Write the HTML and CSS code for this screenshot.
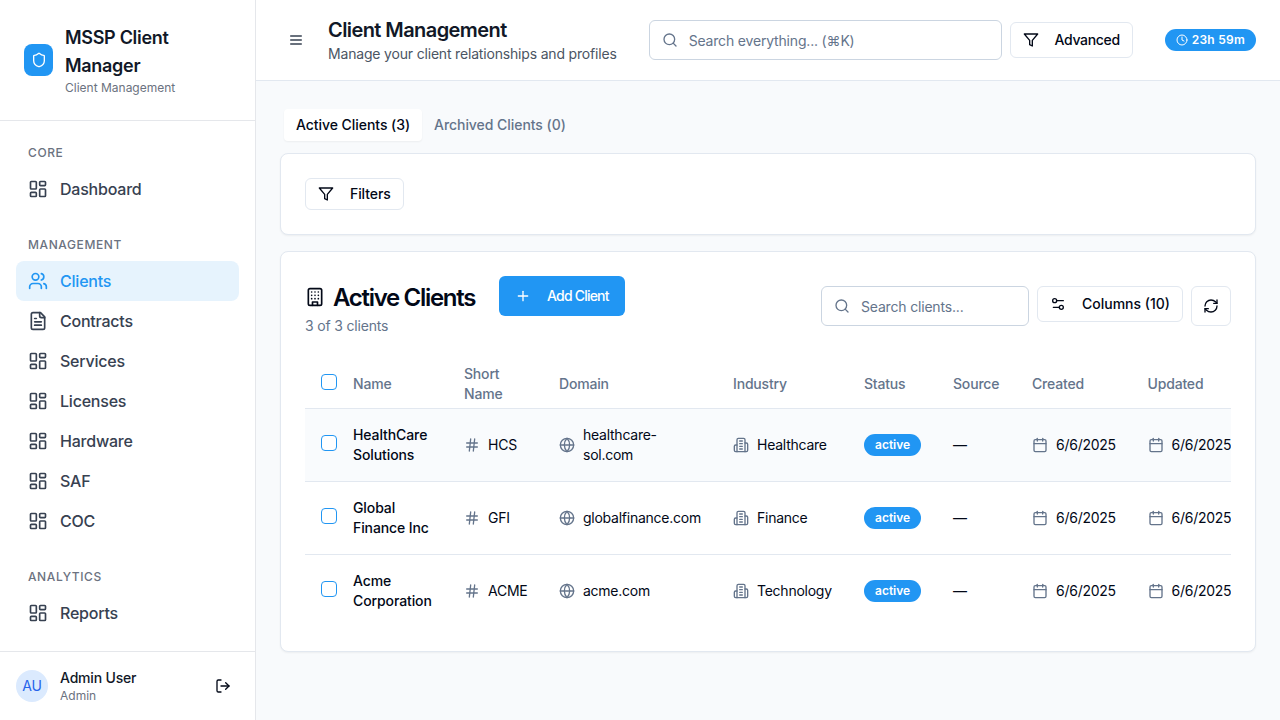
FILE: index.html
```html
<!DOCTYPE html>
<html lang="en">
<head>
    <meta charset="UTF-8">
    <meta name="viewport" content="width=device-width, initial-scale=1.0">
    <title>MSSP Client Manager</title>
    <link rel="stylesheet" href="styles.css">
</head>
<body>
    <!-- icon set -->
    <svg class="icon-defs" aria-hidden="true">
        <symbol id="i-dashboard" viewBox="0 0 24 24"><rect x="3" y="3" width="7" height="9" rx="1"/><rect x="14" y="3" width="7" height="5" rx="1"/><rect x="14" y="12" width="7" height="9" rx="1"/><rect x="3" y="16" width="7" height="5" rx="1"/></symbol>
        <symbol id="i-users" viewBox="0 0 24 24"><path d="M16 21v-2a4 4 0 0 0-4-4H6a4 4 0 0 0-4 4v2"/><circle cx="9" cy="7" r="4"/><path d="M22 21v-2a4 4 0 0 0-3-3.87"/><path d="M16 3.13a4 4 0 0 1 0 7.75"/></symbol>
        <symbol id="i-file" viewBox="0 0 24 24"><path d="M15 2H6a2 2 0 0 0-2 2v16a2 2 0 0 0 2 2h12a2 2 0 0 0 2-2V7Z"/><path d="M14 2v4a2 2 0 0 0 2 2h4"/><path d="M10 9H8"/><path d="M16 13H8"/><path d="M16 17H8"/></symbol>
        <symbol id="i-shield" viewBox="0 0 24 24"><path d="M20 13c0 5-3.5 7.5-7.66 8.95a1 1 0 0 1-.67-.01C7.5 20.5 4 18 4 13V6a1 1 0 0 1 1-1c2 0 4.5-1.2 6.24-2.72a1.17 1.17 0 0 1 1.52 0C14.51 3.81 17 5 19 5a1 1 0 0 1 1 1z"/></symbol>
        <symbol id="i-menu" viewBox="0 0 24 24"><path d="M4 6h16"/><path d="M4 12h16"/><path d="M4 18h16"/></symbol>
        <symbol id="i-search" viewBox="0 0 24 24"><circle cx="11" cy="11" r="8"/><path d="m21 21-4.3-4.3"/></symbol>
        <symbol id="i-filter" viewBox="0 0 24 24"><polygon points="22 3 2 3 10 12.46 10 19 14 21 14 12.46 22 3"/></symbol>
        <symbol id="i-clock" viewBox="0 0 24 24"><circle cx="12" cy="12" r="10"/><polyline points="12 6 12 12 16 14"/></symbol>
        <symbol id="i-plus" viewBox="0 0 24 24"><path d="M5 12h14"/><path d="M12 5v14"/></symbol>
        <symbol id="i-building" viewBox="0 0 24 24"><rect x="4" y="2" width="16" height="20" rx="2"/><path d="M9 22v-4h6v4"/><path d="M8 6h.01"/><path d="M16 6h.01"/><path d="M12 6h.01"/><path d="M12 10h.01"/><path d="M12 14h.01"/><path d="M16 10h.01"/><path d="M16 14h.01"/><path d="M8 10h.01"/><path d="M8 14h.01"/></symbol>
        <symbol id="i-building2" viewBox="0 0 24 24"><path d="M6 22V4a2 2 0 0 1 2-2h8a2 2 0 0 1 2 2v18Z"/><path d="M6 12H4a2 2 0 0 0-2 2v6a2 2 0 0 0 2 2h2"/><path d="M18 9h2a2 2 0 0 1 2 2v9a2 2 0 0 1-2 2h-2"/><path d="M10 6h4"/><path d="M10 10h4"/><path d="M10 14h4"/><path d="M10 18h4"/></symbol>
        <symbol id="i-hash" viewBox="0 0 24 24"><path d="M4 9h16"/><path d="M4 15h16"/><path d="M10 3 8 21"/><path d="M16 3l-2 18"/></symbol>
        <symbol id="i-globe" viewBox="0 0 24 24"><circle cx="12" cy="12" r="10"/><path d="M12 2a14.5 14.5 0 0 0 0 20 14.5 14.5 0 0 0 0-20"/><path d="M2 12h20"/></symbol>
        <symbol id="i-calendar" viewBox="0 0 24 24"><path d="M8 2v4"/><path d="M16 2v4"/><rect x="3" y="4" width="18" height="18" rx="2"/><path d="M3 10h18"/></symbol>
        <symbol id="i-sliders" viewBox="0 0 24 24"><path d="M20 7h-9"/><path d="M14 17H5"/><circle cx="17" cy="17" r="3"/><circle cx="7" cy="7" r="3"/></symbol>
        <symbol id="i-refresh" viewBox="0 0 24 24"><path d="M3 12a9 9 0 0 1 9-9 9.75 9.75 0 0 1 6.74 2.74L21 8"/><path d="M21 3v5h-5"/><path d="M21 12a9 9 0 0 1-9 9 9.75 9.75 0 0 1-6.74-2.74L3 16"/><path d="M8 16H3v5"/></symbol>
        <symbol id="i-logout" viewBox="0 0 24 24"><path d="M9 21H5a2 2 0 0 1-2-2V5a2 2 0 0 1 2-2h4"/><polyline points="16 17 21 12 16 7"/><path d="M21 12H9"/></symbol>
    </svg>

    <div class="app">
        <aside class="sidebar">
            <div class="brand">
                <div class="brand-logo"><svg class="icon"><use href="#i-shield"/></svg></div>
                <div>
                    <div class="brand-title">MSSP Client Manager</div>
                    <div class="brand-sub">Client Management</div>
                </div>
            </div>

            <nav class="nav">
                <div class="nav-section">
                    <div class="nav-label">Core</div>
                    <a class="nav-item"><svg class="icon-nav"><use href="#i-dashboard"/></svg>Dashboard</a>
                </div>
                <div class="nav-section">
                    <div class="nav-label">Management</div>
                    <a class="nav-item active"><svg class="icon-nav"><use href="#i-users"/></svg>Clients</a>
                    <a class="nav-item"><svg class="icon-nav"><use href="#i-file"/></svg>Contracts</a>
                    <a class="nav-item"><svg class="icon-nav"><use href="#i-dashboard"/></svg>Services</a>
                    <a class="nav-item"><svg class="icon-nav"><use href="#i-dashboard"/></svg>Licenses</a>
                    <a class="nav-item"><svg class="icon-nav"><use href="#i-dashboard"/></svg>Hardware</a>
                    <a class="nav-item"><svg class="icon-nav"><use href="#i-dashboard"/></svg>SAF</a>
                    <a class="nav-item"><svg class="icon-nav"><use href="#i-dashboard"/></svg>COC</a>
                </div>
                <div class="nav-section">
                    <div class="nav-label">Analytics</div>
                    <a class="nav-item"><svg class="icon-nav"><use href="#i-dashboard"/></svg>Reports</a>
                </div>
            </nav>

            <div class="user">
                <div class="avatar">AU</div>
                <div class="user-info">
                    <div class="user-name">Admin User</div>
                    <div class="user-role">Admin</div>
                </div>
                <button class="logout"><svg class="icon"><use href="#i-logout"/></svg></button>
            </div>
        </aside>

        <div class="content">
            <header class="topbar">
                <button class="menu-btn"><svg class="icon"><use href="#i-menu"/></svg></button>
                <div class="page-heading">
                    <h1>Client Management</h1>
                    <p>Manage your client relationships and profiles</p>
                </div>
                <label class="search search-global">
                    <svg class="icon"><use href="#i-search"/></svg>
                    <input type="text" placeholder="Search everything... (⌘K)">
                </label>
                <button class="btn"><svg class="icon"><use href="#i-filter"/></svg>Advanced</button>
                <div class="session"><svg class="icon-xs"><use href="#i-clock"/></svg>23h 59m</div>
            </header>

            <main class="main">
                <div class="tabs">
                    <button class="tab active">Active Clients (3)</button>
                    <button class="tab">Archived Clients (0)</button>
                </div>

                <section class="card filters">
                    <button class="btn btn-sm"><svg class="icon"><use href="#i-filter"/></svg>Filters</button>
                </section>

                <section class="card clients">
                    <div class="clients-head">
                        <div>
                            <div class="clients-title">
                                <h2><svg class="icon-title"><use href="#i-building"/></svg>Active Clients</h2>
                                <button class="btn-primary"><svg class="icon"><use href="#i-plus"/></svg>Add Client</button>
                            </div>
                            <div class="clients-count">3 of 3 clients</div>
                        </div>
                        <div class="clients-tools">
                            <label class="search search-clients">
                                <svg class="icon"><use href="#i-search"/></svg>
                                <input type="text" placeholder="Search clients...">
                            </label>
                            <button class="btn"><svg class="icon"><use href="#i-sliders"/></svg>Columns (10)</button>
                            <button class="btn btn-icon"><svg class="icon"><use href="#i-refresh"/></svg></button>
                        </div>
                    </div>

                    <div class="table-wrap">
                        <table class="table">
                            <colgroup>
                                <col class="col-check"><col class="col-name"><col class="col-short"><col class="col-domain">
                                <col class="col-industry"><col class="col-status"><col class="col-source"><col class="col-date"><col class="col-date">
                            </colgroup>
                            <thead>
                                <tr>
                                    <th class="cell-check"><input class="check" type="checkbox"></th>
                                    <th>Name</th>
                                    <th>Short Name</th>
                                    <th>Domain</th>
                                    <th>Industry</th>
                                    <th>Status</th>
                                    <th>Source</th>
                                    <th>Created</th>
                                    <th>Updated</th>
                                </tr>
                            </thead>
                            <tbody>
                                <tr class="hover">
                                    <td class="cell-check"><input class="check" type="checkbox"></td>
                                    <td class="cell-name">HealthCare Solutions</td>
                                    <td><div class="with-icon"><svg class="icon muted"><use href="#i-hash"/></svg>HCS</div></td>
                                    <td><div class="with-icon"><svg class="icon muted"><use href="#i-globe"/></svg><span>healthcare-sol.com</span></div></td>
                                    <td><div class="with-icon"><svg class="icon muted"><use href="#i-building2"/></svg>Healthcare</div></td>
                                    <td><span class="badge">active</span></td>
                                    <td>—</td>
                                    <td><div class="with-icon nowrap"><svg class="icon muted"><use href="#i-calendar"/></svg>6/6/2025</div></td>
                                    <td><div class="with-icon nowrap"><svg class="icon muted"><use href="#i-calendar"/></svg>6/6/2025</div></td>
                                </tr>
                                <tr>
                                    <td class="cell-check"><input class="check" type="checkbox"></td>
                                    <td class="cell-name">Global Finance Inc</td>
                                    <td><div class="with-icon"><svg class="icon muted"><use href="#i-hash"/></svg>GFI</div></td>
                                    <td><div class="with-icon"><svg class="icon muted"><use href="#i-globe"/></svg><span>globalfinance.com</span></div></td>
                                    <td><div class="with-icon"><svg class="icon muted"><use href="#i-building2"/></svg>Finance</div></td>
                                    <td><span class="badge">active</span></td>
                                    <td>—</td>
                                    <td><div class="with-icon nowrap"><svg class="icon muted"><use href="#i-calendar"/></svg>6/6/2025</div></td>
                                    <td><div class="with-icon nowrap"><svg class="icon muted"><use href="#i-calendar"/></svg>6/6/2025</div></td>
                                </tr>
                                <tr>
                                    <td class="cell-check"><input class="check" type="checkbox"></td>
                                    <td class="cell-name">Acme Corporation</td>
                                    <td><div class="with-icon"><svg class="icon muted"><use href="#i-hash"/></svg>ACME</div></td>
                                    <td><div class="with-icon"><svg class="icon muted"><use href="#i-globe"/></svg><span>acme.com</span></div></td>
                                    <td><div class="with-icon"><svg class="icon muted"><use href="#i-building2"/></svg>Technology</div></td>
                                    <td><span class="badge">active</span></td>
                                    <td>—</td>
                                    <td><div class="with-icon nowrap"><svg class="icon muted"><use href="#i-calendar"/></svg>6/6/2025</div></td>
                                    <td><div class="with-icon nowrap"><svg class="icon muted"><use href="#i-calendar"/></svg>6/6/2025</div></td>
                                </tr>
                            </tbody>
                        </table>
                    </div>
                </section>
            </main>
        </div>
    </div>
</body>
</html>
```

FILE: styles.css
```css
* {
    box-sizing: border-box;
}
html, body {
    height: 100%;
    margin: 0;
    overflow: hidden;
}
body {
    font-family: Inter, "Liberation Sans", sans-serif;
    font-size: 14px;
    line-height: 20px;
    letter-spacing: -0.18px;
    color: #020817;
    background-color: #f8fafc;
}
button {
    font: inherit;
    letter-spacing: inherit;
    color: inherit;
    background: none;
    border: none;
    padding: 0;
    cursor: pointer;
}
.icon-defs {
    display: none;
}
.icon, .icon-nav, .icon-xs, .icon-title {
    flex: none;
    fill: none;
    stroke: currentColor;
    stroke-width: 2;
    stroke-linecap: round;
    stroke-linejoin: round;
}
.icon {
    width: 16px;
    height: 16px;
}
.icon-nav, .icon-title {
    width: 20px;
    height: 20px;
}
.icon-title {
    margin-top: -2px;
}
.icon-xs {
    width: 12px;
    height: 12px;
}
.muted {
    color: #64748b;
}
.app {
    display: flex;
    height: 100%;
}

/* sidebar */
.sidebar {
    display: flex;
    flex-direction: column;
    flex: none;
    width: 256px;
    height: 100%;
    background-color: #fff;
    border-right: 1px solid #e5e7eb;
}
.brand {
    display: flex;
    align-items: center;
    gap: 12px;
    padding: 24px;
    border-bottom: 1px solid #e5e7eb;
}
.brand-logo {
    display: flex;
    align-items: center;
    justify-content: center;
    flex: none;
    width: 29px;
    height: 32px;
    color: #fff;
    background-color: #2196f3;
    border-radius: 8px;
}
.brand-title {
    font-size: 18px;
    line-height: 28px;
    font-weight: 600;
    letter-spacing: -0.3px;
    color: #111827;
}
.brand-sub {
    font-size: 12px;
    line-height: 16px;
    letter-spacing: 0;
    color: #6b7280;
}
.nav {
    flex: 1;
    min-height: 0;
    padding: 24px 16px 0;
}
.nav-section {
    margin-bottom: 28px;
}
.nav-label {
    padding: 0 12px;
    margin-bottom: 8px;
    font-size: 12px;
    line-height: 16px;
    font-weight: 500;
    letter-spacing: 0.6px;
    text-transform: uppercase;
    color: #6b7280;
}
.nav-item {
    display: flex;
    align-items: center;
    gap: 12px;
    height: 40px;
    padding: 0 12px;
    font-size: 16px;
    font-weight: 500;
    letter-spacing: -0.22px;
    color: #374151;
    border-radius: 8px;
}
.nav-item.active {
    color: #2196f3;
    background-color: #e6f3fd;
}
.user {
    display: flex;
    align-items: center;
    flex: none;
    gap: 12px;
    height: 69px;
    padding: 0 16px;
    border-top: 1px solid #e5e7eb;
}
.avatar {
    display: flex;
    align-items: center;
    justify-content: center;
    flex: none;
    width: 32px;
    height: 32px;
    font-size: 14px;
    color: #2563eb;
    background-color: #dbeafe;
    border-radius: 50%;
}
.user-info {
    flex: 1;
}
.user-name {
    font-weight: 500;
    color: #111827;
}
.user-role {
    font-size: 12px;
    line-height: 16px;
    letter-spacing: 0;
    color: #6b7280;
}
.logout {
    display: flex;
    align-items: center;
    justify-content: center;
    width: 32px;
    height: 32px;
}

/* top bar */
.content {
    display: flex;
    flex-direction: column;
    flex: 1;
    min-width: 0;
}
.topbar {
    display: flex;
    align-items: center;
    flex: none;
    height: 81px;
    padding: 0 24px;
    background-color: #fff;
    border-bottom: 1px solid #e2e8f0;
}
.menu-btn {
    display: flex;
    align-items: center;
    justify-content: center;
    flex: none;
    width: 32px;
    height: 32px;
    margin-right: 16px;
    color: #374151;
}
.page-heading {
    flex: none;
    margin-right: 32px;
}
.page-heading h1 {
    margin: 0;
    font-size: 20px;
    line-height: 28px;
    font-weight: 600;
    letter-spacing: -0.58px;
    color: #111827;
}
.page-heading p {
    margin: 0;
    color: #4b5563;
}
.search {
    display: flex;
    align-items: center;
    height: 40px;
    padding: 0 12px;
    color: #64748b;
    background-color: #fff;
    border: 1px solid #cbd5e1;
    border-radius: 6px;
}
.search input {
    flex: 1;
    min-width: 0;
    padding: 2px 0 0;
    margin-left: 11px;
    font: inherit;
    letter-spacing: inherit;
    border: none;
    outline: none;
    background: none;
}
.search input::placeholder {
    color: #64748b;
    opacity: 1;
}
.search-global {
    flex: 1;
    margin-right: 8px;
}
.search-clients {
    width: 208px;
}
.btn {
    display: flex;
    align-items: center;
    gap: 16px;
    flex: none;
    height: 36px;
    padding: 0 12px;
    font-weight: 500;
    letter-spacing: 0;
    background-color: #fff;
    border: 1px solid #e2e8f0;
    border-radius: 6px;
}
.topbar .btn {
    letter-spacing: -0.33px;
}
.btn-sm {
    height: 32px;
    letter-spacing: -0.08px;
}
.btn-icon {
    justify-content: center;
    width: 40px;
    height: 40px;
    padding: 0;
}
.session {
    display: flex;
    align-items: center;
    gap: 4px;
    flex: none;
    height: 22px;
    padding: 0 11px;
    margin-left: 32px;
    font-size: 12px;
    font-weight: 600;
    letter-spacing: 0.25px;
    color: #fff;
    background-color: #2196f3;
    border-radius: 11px;
}

/* main area */
.main {
    flex: 1;
    padding: 24px;
}
.tabs {
    display: flex;
    height: 40px;
    padding: 4px;
    margin-bottom: 8px;
}
.tab {
    padding: 0 12px;
    font-weight: 500;
    letter-spacing: -0.05px;
    color: #64748b;
    border-radius: 4px;
}
.tab.active {
    color: #020817;
    background-color: #fff;
    box-shadow: 0 1px 2px rgba(0, 0, 0, 0.05);
}
.card {
    padding: 24px;
    background-color: #fff;
    border: 1px solid #e2e8f0;
    border-radius: 8px;
    box-shadow: 0 1px 2px rgba(0, 0, 0, 0.05);
}
.filters {
    margin-bottom: 16px;
}
.clients-head {
    display: flex;
    align-items: center;
    justify-content: space-between;
    margin-bottom: 24px;
}
.clients-title {
    display: flex;
    align-items: center;
    gap: 24px;
}
.clients-title h2 {
    display: flex;
    align-items: center;
    gap: 8px;
    margin: 0;
    padding-top: 4px;
    font-size: 24px;
    line-height: 32px;
    font-weight: 600;
    letter-spacing: -1.3px;
}
.btn-primary {
    display: flex;
    align-items: center;
    gap: 16px;
    height: 40px;
    padding: 0 16px;
    font-weight: 500;
    letter-spacing: -0.8px;
    color: #fff;
    background-color: #2196f3;
    border-radius: 6px;
}
.clients-count {
    color: #64748b;
}
.clients-tools {
    display: flex;
    align-items: flex-start;
    gap: 8px;
}

/* table */
.table-wrap {
    overflow: hidden;
}
.table {
    width: 942px;
    table-layout: fixed;
    border-collapse: collapse;
}
.col-check { width: 32px; }
.col-name { width: 111px; }
.col-short { width: 95px; }
.col-domain { width: 174px; }
.col-industry { width: 131px; }
.col-status { width: 89px; }
.col-source { width: 79px; }
.col-date { width: 115.5px; }
.table th {
    padding: 4px 16px;
    font-weight: 500;
    text-align: left;
    color: #64748b;
    border-bottom: 1px solid #e2e8f0;
}
.table td {
    padding: 16px;
    letter-spacing: -0.25px;
    border-bottom: 1px solid #e2e8f0;
}
.table tbody tr:last-child td {
    border-bottom: none;
}
.table .cell-check {
    padding-right: 0;
}
.check {
    appearance: none;
    display: inline-block;
    width: 16px;
    height: 16px;
    margin: 0;
    background-color: #fff;
    border: 1px solid #2196f3;
    border-radius: 4px;
}
.hover {
    background-color: #f9fbfd;
}
.table .cell-name {
    font-weight: 500;
    letter-spacing: -0.1px;
}
.with-icon {
    display: flex;
    align-items: center;
    gap: 8px;
}
.nowrap {
    white-space: nowrap;
}
.badge {
    display: inline-block;
    padding: 2px 11px;
    font-size: 12px;
    line-height: 18px;
    font-weight: 600;
    letter-spacing: 0;
    color: #fff;
    background-color: #2196f3;
    border-radius: 11px;
}
```
